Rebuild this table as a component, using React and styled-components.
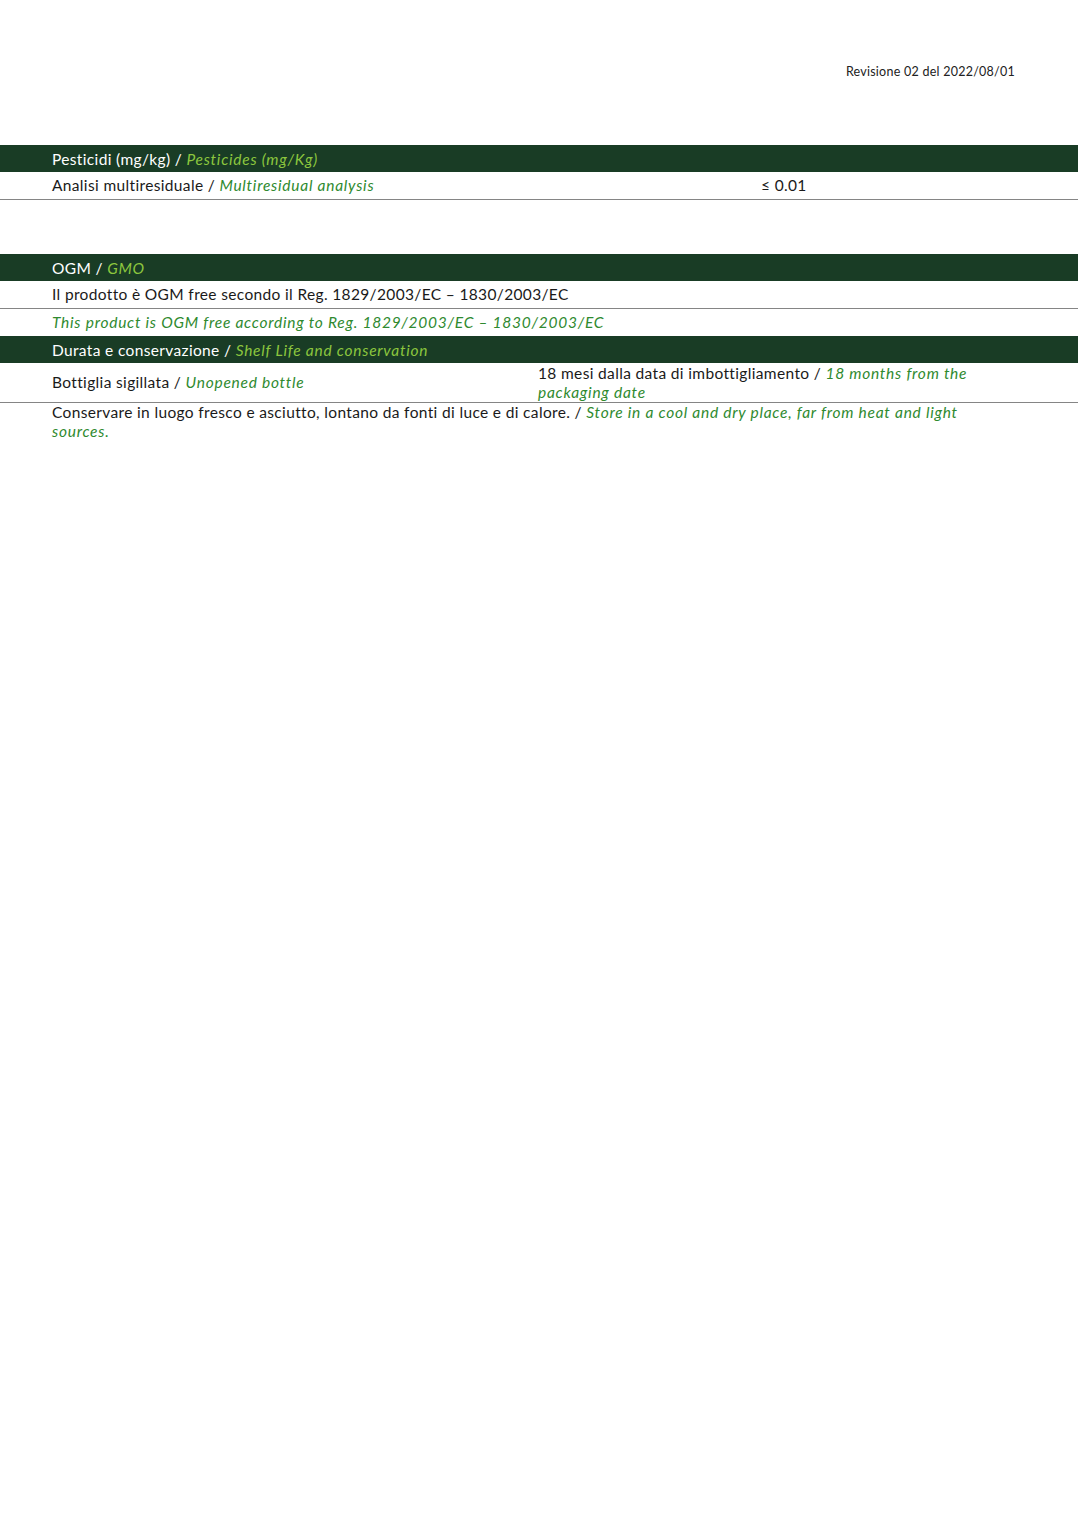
import React from "react";
import styled, { createGlobalStyle } from "styled-components";

const Global = createGlobalStyle`
  html, body { margin: 0; padding: 0; background: #ffffff; }
  body { font-family: "Lato", "DejaVu Sans", sans-serif; color: #1a1a1a; }
`;

const Page = styled.div`
  width: 1080px;
  min-height: 1527px;
  background: #fff;
  padding-top: 64px;
  box-sizing: border-box;
`;

const Revision = styled.div`
  display: flex;
  justify-content: flex-end;
  padding-right: 65px;
  font-size: 12.5px;
  letter-spacing: 0.25px;
  color: #222;
  height: 81px;
`;

const Section = styled.section`
  width: 1078px;
  margin-bottom: ${(p) => p.$gap || 0}px;
`;

const Header = styled.div`
  background: #193c25;
  color: #ffffff;
  height: 27px;
  display: flex;
  align-items: center;
  padding-left: 52px;
  font-size: 15.5px;
  letter-spacing: 0.35px;
`;

const Row = styled.div`
  display: grid;
  grid-template-columns: ${(p) => p.$cols || "1fr"};
  align-items: ${(p) => p.$align || "center"};
  min-height: ${(p) => p.$h || 27}px;
  padding-left: 52px;
  padding-right: ${(p) => p.$pr || 0}px;
  border-bottom: ${(p) => (p.$line ? "1.5px solid #858585" : "none")};
  font-size: 15.5px;
  letter-spacing: 0.35px;
  line-height: 19px;
  box-sizing: border-box;
`;

const Cell = styled.div`
  padding-top: ${(p) => p.$pt || 0}px;
`;

const En = styled.span`
  font-style: italic;
  letter-spacing: 0.75px;
  color: ${(p) => (p.$light ? "#8cc63e" : "#2f8a2f")};
`;

export default function App() {
  return (
    <>
      <Global />
      <Page>
        <Revision>Revisione 02 del 2022/08/01</Revision>
        <Section $gap={54}>
          <Header>
            Pesticidi (mg/kg) /&nbsp;<En $light>Pesticides (mg/Kg)</En>
          </Header>
          <Row $cols="709px 1fr" $h={28} $line>
            <Cell>
              Analisi multiresiduale / <En>Multiresidual analysis</En>
            </Cell>
            <Cell>≤ 0.01</Cell>
          </Row>
        </Section>
        <Section>
          <Header>
            OGM /&nbsp;<En $light>GMO</En>
          </Header>
          <Row $h={28} $line>
            <Cell>Il prodotto è OGM free secondo il Reg. 1829/2003/EC – 1830/2003/EC</Cell>
          </Row>
          <Row $h={27}>
            <Cell>
              <En>This product is OGM free according to Reg. 1829/2003/EC – 1830/2003/EC</En>
            </Cell>
          </Row>
          <Header>
            Durata e conservazione /&nbsp;<En $light>Shelf Life and conservation</En>
          </Header>
          <Row $cols="486px 1fr" $h={38} $pr={60} $align="start" $line>
            <Cell $pt={10}>
              Bottiglia sigillata / <En>Unopened bottle</En>
            </Cell>
            <Cell $pt={1}>
              18 mesi dalla data di imbottigliamento / <En>18 months from the packaging date</En>
            </Cell>
          </Row>
          <Row $h={38} $pr={62} $align="start">
            <Cell>
              Conservare in luogo fresco e asciutto, lontano da fonti di luce e di calore. /{" "}
              <En>Store in a cool and dry place, far from heat and light sources.</En>
            </Cell>
          </Row>
        </Section>
      </Page>
    </>
  );
}
